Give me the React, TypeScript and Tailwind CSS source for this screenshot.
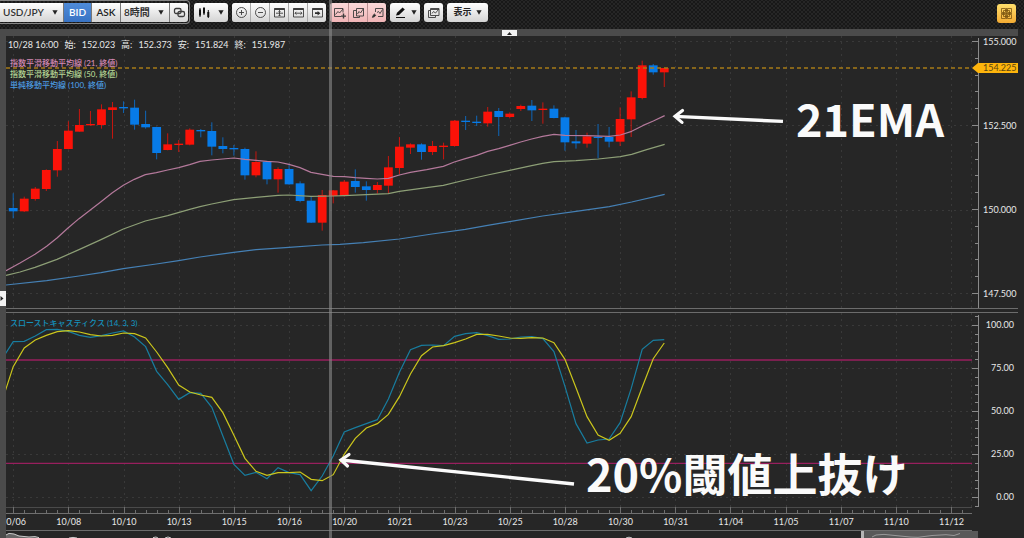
import type { ReactNode } from 'react'

type Candle = [color: 'r' | 'b', open: number, close: number, high: number, low: number]

const STEP = 11.035
const FIRST_X = 13.2
const RED = '#fb1208'
const BLUE = '#077be8'

// body top, body bottom, wick top, wick bottom (1/3 px below y=90)
const CANDLES: Candle[] = [
  ['b', 354, 364, 310, 385],
  ['r', 326, 364, 320, 366],
  ['r', 296, 327, 291, 332],
  ['r', 240, 297, 238, 303],
  ['r', 177, 241, 153, 260],
  ['r', 122, 177, 94, 178],
  ['r', 105, 125, 57, 125],
  ['r', 102, 106, 63, 107],
  ['r', 58, 105, 43, 116],
  ['r', 52, 60, 36, 146],
  ['b', 51, 55, 34, 69],
  ['b', 53, 104, 29, 119],
  ['b', 102, 112, 62, 116],
  ['b', 111, 189, 110, 208],
  ['r', 163, 180, 130, 181],
  ['r', 161, 165, 150, 186],
  ['r', 119, 164, 115, 166],
  ['b', 120, 124, 117, 142],
  ['b', 123, 170, 97, 196],
  ['b', 168, 177, 142, 190],
  ['b', 174, 178, 165, 197],
  ['b', 177, 256, 173, 269],
  ['r', 216, 256, 184, 262],
  ['b', 215, 268, 212, 283],
  ['r', 237, 268, 232, 308],
  ['b', 237, 283, 221, 284],
  ['b', 280, 333, 274, 337],
  ['b', 332, 398, 320, 399],
  ['r', 315, 398, 300, 422],
  ['r', 301, 318, 300, 340],
  ['r', 275, 318, 270, 320],
  ['b', 273, 291, 238, 308],
  ['b', 289, 300, 274, 332],
  ['r', 285, 300, 276, 311],
  ['r', 232, 287, 198, 311],
  ['r', 170, 234, 141, 252],
  ['r', 163, 173, 160, 192],
  ['b', 163, 186, 160, 209],
  ['r', 168, 186, 153, 195],
  ['r', 167, 171, 158, 208],
  ['r', 92, 168, 90, 170],
  ['b', 92, 96, 78, 120],
  ['b', 95, 99, 77, 108],
  ['r', 65, 100, 51, 110],
  ['b', 63, 81, 54, 138],
  ['r', 71, 81, 67, 85],
  ['r', 48, 57, 44, 63],
  ['b', 47, 61, 30, 93],
  ['r', 56, 60, 37, 101],
  ['b', 56, 84, 46, 85],
  ['b', 82, 157, 80, 182],
  ['b', 154, 160, 120, 176],
  ['r', 139, 161, 128, 173],
  ['b', 140, 144, 102, 205],
  ['b', 141, 155, 111, 172],
  ['r', 87, 155, 52, 168],
  ['r', 22, 88, 4, 141],
  ['r', -74, 24, -88, 28],
  ['b', -74, -53, -78, -46],
  ['r', -66, -53, -66, -9],
]

const AVERAGES = [
  {
    color: '#b4799b',
    points:
      '18,542 60,519 105,493 140,469 171,444 204,414 237,386 270,361 303,335 337,308 370,286 403,268 436,254 469,248 503,240 536,233 569,224 600,214 635,210 668,207 701,204 735,208 768,211 800,214 834,216 867,223 900,233 933,247 966,253 1000,259 1033,260 1066,263 1099,265 1132,267 1165,265 1198,255 1231,247 1280,239 1330,229 1363,216 1396,206 1430,196 1463,184 1496,176 1529,166 1562,156 1595,147 1628,139 1662,133 1695,136 1761,137 1827,139 1861,135 1895,124 1928,107 1960,93 1994,77',
  },
  {
    color: '#8d9f76',
    points:
      '18,556 60,546 105,532 171,508 237,479 303,449 370,417 436,393 503,377 569,358 600,350 635,342 701,329 768,322 834,316 867,315 933,319 1000,318 1033,317 1099,314 1165,311 1198,304 1280,293 1330,286 1396,270 1463,255 1529,241 1595,227 1628,220 1662,215 1728,212 1795,207 1861,200 1895,193 1940,179 1994,163',
  },
  {
    color: '#4580b5',
    points:
      '18,585 140,572 237,558 303,548 370,536 469,522 536,512 600,501 701,487 768,479 867,472 966,465 1020,463 1090,458 1198,447 1296,432 1396,418 1463,406 1529,395 1628,378 1728,364 1828,350 1895,336 1994,313',
  },
]

// one value per candle, starting one step left of the plot (1/3 px below y=300)
const SLOW_K = [
  177, 125, 124, 108, 89, 88, 94, 106, 112, 107, 99, 93, 111, 140, 214, 254, 298, 278, 280, 322, 408,
  493, 526, 517, 536, 503, 518, 524, 572, 528, 468, 396, 383, 371, 359, 297, 217, 149, 136, 135, 137,
  109, 101, 98, 107, 118, 117, 111, 110, 116, 155, 259, 371, 429, 420, 417, 368, 266, 148, 121, 119,
]
const SLOW_D = [
  302, 200, 144, 120, 106, 95, 92, 96, 104, 108, 106, 99, 101, 114, 156, 203, 255, 276, 285, 292, 338,
  406, 475, 514, 526, 518, 518, 516, 538, 542, 524, 463, 415, 384, 371, 343, 290, 222, 167, 141, 137,
  128, 117, 103, 103, 108, 114, 115, 113, 114, 128, 178, 263, 350, 405, 421, 400, 350, 262, 176, 129,
]

const DATES = [
  '10/06', '10/08', '10/10', '10/13', '10/15', '10/16', '10/20', '10/21', '10/23',
  '10/25', '10/28', '10/30', '10/31', '11/04', '11/05', '11/07', '11/10', '11/12',
]
const PRICES = ['155.000', '152.500', '150.000', '147.500']
const LEVELS = ['100.00', '75.00', '50.00', '25.00', '0.00']
const OHLC = [
  ['始:', '152.023'],
  ['高:', '152.373'],
  ['安:', '151.824'],
  ['終:', '151.987'],
]

const range = (n: number) => Array.from({ length: n }, (_, i) => i)
const toPoints = (values: number[]) =>
  values.map((v, i) => `${FIRST_X + (i - 1) * STEP},${300 + v / 3}`).join(' ')

const BTN = 'flex h-[19px] items-center justify-center bg-linear-to-b from-white to-[#d4d4d4] text-[#222]'
const GROUP = 'flex h-[19px] overflow-hidden rounded-[3px]'

function Caret() {
  return (
    <svg width="6" height="5" viewBox="0 0 6 5" aria-hidden="true" className="pointer-events-none">
      <path d="M0.4 0.3h5.2L3 4.7z" fill="#222" />
    </svg>
  )
}

function Icon({ children }: { children: ReactNode }) {
  return (
    <svg
      width="13"
      height="13"
      viewBox="0 0 13 13"
      fill="none"
      stroke="#3c3c3c"
      strokeWidth="0.9"
      aria-hidden="true"
    >
      {children}
    </svg>
  )
}

function Picker({ label, value, className }: { label: string; value: string; className: string }) {
  return (
    <label className={`relative flex h-full items-center bg-linear-to-b from-white to-[#d4d4d4] ${className}`}>
      <select
        aria-label={label}
        className="h-full w-full appearance-none pl-[3px] text-[10px] leading-[19px] font-semibold text-[#333] outline-none"
      >
        <option>{value}</option>
      </select>
      <span className="pointer-events-none absolute right-[5px]">
        <Caret />
      </span>
    </label>
  )
}

const FRAME_ICONS = [
  {
    name: '全体表示',
    icon: (
      <>
        <path d="M1.5 2.5h10v8.5h-10zM6.5 4.5v5.5M3 7.2h7M5.5 5.5l1-1 1 1M5.5 9l1 1 1-1" />
        <path d="M1.5 3h10" strokeWidth="1.8" />
      </>
    ),
  },
  {
    name: '幅を広げる',
    icon: (
      <>
        <path d="M1.5 2.5h10v8.5h-10zM3 7.2h7M4.4 5.8L3 7.2l1.4 1.4M8.6 5.8L10 7.2 8.6 8.6" />
        <path d="M1.5 3h10" strokeWidth="1.8" />
      </>
    ),
  },
  {
    name: '最新へ移動',
    icon: (
      <>
        <path d="M1.5 2.5h10v8.5h-10z" />
        <path d="M1.5 3h10" strokeWidth="1.8" />
        <path d="M4 6.3h2.6V4.9L9.4 7.2 6.6 9.5V8.1H4z" fill="#2a2a2a" stroke="none" />
      </>
    ),
  },
]

const DRAW_ICONS = [
  {
    name: '描画を追加',
    icon: (
      <>
        <path d="M8 10.5H1.5v-8h8.5v4M2.5 8.5L5 5.5 6.5 7 10 3" />
        <path d="M10.5 7.6v5M8 10.1h5" strokeWidth="1.4" />
      </>
    ),
  },
  {
    name: '描画を複製',
    icon: <path d="M4 4.5H1.5v7h6V10M4.5 2.5h7v7.5h-7zM5.5 8l1.5-2.5L8.5 7l3-4.5" />,
  },
  {
    name: '描画を消去',
    icon: (
      <>
        <path d="M4.5 6V2.5h7.5v8H7M6 6.5l1.5-1L9 7.5l2.5-4" />
        <path d="M1.4 11.4l.8-2.2 1.2-1.2 1.4 1.4-1.2 1.2z" fill="#2a2a2a" />
      </>
    ),
  },
]

function Toolbar() {
  return (
    <header className="flex h-[29px] items-start justify-between bg-[#262626] bg-[radial-gradient(#0a0a0a_22%,transparent_28%),radial-gradient(#0a0a0a_22%,transparent_28%)] bg-size-[4px_4px] bg-position-[0_0,2px_2px] pr-2">
      <div className="flex items-center gap-1">
        <div className="flex h-6 items-center rounded-r-[4px] border border-l-0 border-[#858585] pr-px">
          <div className="flex h-[19px] gap-px overflow-hidden rounded-r-[3px] bg-[#777]">
            <Picker label="通貨ペア" value="USD/JPY" className="w-[63px]" />
            <button className="h-full w-[27px] bg-linear-to-b from-[#4f8bd8] to-[#3873c4] text-[10px] font-semibold text-white">
              BID
            </button>
            <button className={`${BTN} w-7 text-[10px] font-semibold`}>ASK</button>
            <Picker label="足種" value="8時間" className="w-12" />
            <button aria-label="連動" className={`${BTN} w-[18px]`}>
              <Icon>
                <rect x="1.5" y="2.5" width="6.5" height="5" rx="1.5" strokeWidth="1.3" />
                <rect x="5" y="5.5" width="6.5" height="5" rx="1.5" strokeWidth="1.3" />
              </Icon>
            </button>
          </div>
        </div>
        <button aria-label="チャート種類" className={`${BTN} w-[34px] gap-2 rounded-[3px]`}>
          <svg width="12" height="13" viewBox="0 0 12 13" aria-hidden="true">
            <path d="M2 2v9M6 1v8M10.3 4v8" stroke="#111" />
            <path d="M1 3.5h2v6H1zM5 2h2v5.5H5zM9.3 6h2v5h-2z" fill="#111" />
          </svg>
          <Caret />
        </button>
        <div className={`${GROUP} gap-px bg-[#aaa]`}>
          <button aria-label="拡大" className={`${BTN} w-[18px]`}>
            <Icon>
              <circle cx="6.5" cy="6.5" r="5" />
              <path d="M4 6.5h5M6.5 4v5" />
            </Icon>
          </button>
          <button aria-label="縮小" className={`${BTN} w-[18px]`}>
            <Icon>
              <circle cx="6.5" cy="6.5" r="5" />
              <path d="M4 6.5h5" />
            </Icon>
          </button>
          {FRAME_ICONS.map((item) => (
            <button key={item.name} aria-label={item.name} className={`${BTN} w-[18px]`}>
              <Icon>{item.icon}</Icon>
            </button>
          ))}
        </div>
        <div className={`${GROUP} gap-px bg-[#b98f90]`}>
          {DRAW_ICONS.map((item) => (
            <button
              key={item.name}
              aria-label={item.name}
              className="flex h-full w-[18px] items-center justify-center bg-linear-to-b from-[#fbd9d9] to-[#f0b4b6]"
            >
              <Icon>{item.icon}</Icon>
            </button>
          ))}
        </div>
        <button aria-label="ペン" className={`${BTN} w-[30px] gap-1 rounded-[3px]`}>
          <svg width="13" height="13" viewBox="0 0 13 13" aria-hidden="true">
            <path d="M2 9.6l1-2.8L8.6 1.4l2.2 2L5 9z" fill="#111" />
            <path d="M2 11.5h9" stroke="#111" />
          </svg>
          <Caret />
        </button>
        <button aria-label="重ねて表示" className={`${BTN} w-[19px] rounded-[3px]`}>
          <Icon>
            <path d="M3.5 4.5h-2v7h7v-2M3.5 2.5h8.5v7H3.5zM5 7.5L6.5 5.5 8.5 7l3-3.5" />
            <path d="M4 3.5h8" />
          </Icon>
        </button>
        <button className={`${BTN} w-[41px] gap-1 rounded-[3px] text-[9px] font-semibold`}>
          表示
          <Caret />
        </button>
      </div>
      <button
        aria-label="レイアウト"
        className="mt-1 flex size-[19px] items-center justify-center rounded-[3px] bg-linear-to-b from-[#ffdf6b] to-[#f3ab32]"
      >
        <svg
          width="13"
          height="13"
          viewBox="0 0 13 13"
          fill="none"
          stroke="#7a5410"
          strokeWidth="0.8"
          aria-hidden="true"
        >
          <path d="M1.5 1.5h4v4h-4zM7.5 1.5h4v4h-4zM1.5 7.5h4v4h-4zM7.5 7.5h4v4h-4zM3.5 3.5h6v6h-6zM6.5 1v11M1 6.5h11" />
        </svg>
      </button>
    </header>
  )
}

function Grid({ rows, top, bottom }: { rows: number[]; top: number; bottom: number }) {
  return (
    <g stroke="#393939" strokeDasharray="2 4">
      {rows.map((y) => (
        <path key={y} d={`M6 ${y}H972`} />
      ))}
      {DATES.map((d, i) => (
        <path key={d} d={`M${Math.round(FIRST_X + i * STEP * 5) + 0.5} ${top}V${bottom}`} />
      ))}
      <path d={`M971.5 ${top}V${bottom}`} />
    </g>
  )
}

function Axis({ top, height, first, minor }: { top: number; height: number; first: number; minor: number }) {
  const before = Math.floor((first - top) / minor)
  const count = Math.floor((top + height - first) / minor) + before + 1
  return (
    <svg
      viewBox={`972 ${top} 7 ${height}`}
      preserveAspectRatio="none"
      className="h-full w-[7px] shrink-0"
      stroke="#8a8a8a"
      aria-hidden="true"
    >
      <path d={`M978.5 ${top + 2}v${height}`} />
      {range(count).map((n) => {
        const i = n - before
        return <path key={i} d={`M${i % 5 === 0 ? 972 : 975} ${Math.round(first + i * minor) + 0.5}H978`} />
      })}
    </svg>
  )
}

function PricePanel() {
  return (
    <section aria-label="価格チャート" className="relative flex h-[272px]">
      <svg viewBox="6 36 966 272" preserveAspectRatio="none" className="h-full min-w-0 flex-1" aria-hidden="true">
        <Grid rows={[41.5, 125.5, 210.5, 293.5]} top={36} bottom={308} />
        {CANDLES.map(([color, top, bottom, high, low], i) => {
          const x = FIRST_X + i * STEP
          const fill = color === 'r' ? RED : BLUE
          return (
            <g key={i} fill={fill}>
              <rect x={x - 0.5} y={90 + high / 3} width="1" height={(low - high) / 3} opacity="0.75" />
              <rect x={x - 4.4} y={90 + top / 3} width="8.8" height={(bottom - top) / 3} />
            </g>
          )
        })}
        <path d="M6 68H972" stroke="#a77b17" strokeWidth="1.4" strokeDasharray="4 3" />
        <g transform="translate(0 90) scale(0.33333)" fill="none" strokeWidth="3.6" strokeLinejoin="round">
          {AVERAGES.map((line) => (
            <polyline key={line.color} points={line.points} stroke={line.color} />
          ))}
        </g>
      </svg>
      <Axis top={36} height={272} first={41} minor={16.8} />
      <ul className="w-[39px] shrink-0 pl-1 text-[9px] leading-3 text-[#e8e8e8]">
        {PRICES.map((price) => (
          <li key={price} className="h-[84px] last:h-3">
            {price}
          </li>
        ))}
      </ul>

      <div className="absolute top-[3px] left-[2px] leading-[11px]">
        <p className="flex gap-[6px] text-[9px] text-[#e8e8e8]">
          <span>10/28 16:00</span>
          {OHLC.map(([name, value]) => (
            <span key={name} className="flex gap-[6px]">
              <span>{name}</span>
              <span>{value}</span>
            </span>
          ))}
        </p>
        <ul className="mt-2 pl-[2px] text-[8px] font-medium">
          <li className="text-[#d489b4]">指数平滑移動平均線 (21, 終値)</li>
          <li className="text-[#b5d695]">指数平滑移動平均線 (50, 終値)</li>
          <li className="text-[#4c9be0]">単純移動平均線 (100, 終値)</li>
        </ul>
      </div>

      <div className="absolute top-[27px] right-0 flex h-[10px] items-center">
        <svg width="6" height="10" viewBox="0 0 6 10" aria-hidden="true">
          <path d="M6 0v10L0 5z" fill="#fdb40c" />
        </svg>
        <span className="h-[10px] w-10 bg-[#fdb40c] pl-[5px] text-[9px] leading-[10px] text-[#5b4410]">154.225</span>
      </div>

      <div className="absolute top-[58px] left-[664px] flex items-center">
        <svg width="114" height="26" viewBox="670 105 114 26" fill="none" stroke="#fafafa" aria-hidden="true">
          <path d="M675 116.4L783 121.4" strokeWidth="3.4" />
          <path d="M682.5 110.5L675 116.4L682 122.4" strokeWidth="3.2" strokeLinecap="round" />
        </svg>
        <strong className="pl-3 font-['Noto_Sans_CJK_JP',sans-serif] text-[45px] leading-[48px] font-bold text-[#fafafa]">
          21EMA
        </strong>
      </div>
    </section>
  )
}

function StochasticPanel() {
  return (
    <section aria-label="スローストキャスティクス" className="relative flex h-[194px]">
      <svg viewBox="6 313 966 194" preserveAspectRatio="none" className="h-full min-w-0 flex-1" aria-hidden="true">
        <Grid rows={[325.5, 368.5, 411.5, 454.5, 497.5]} top={313} bottom={507} />
        <path d="M6 360H972" stroke="#981f5e" strokeWidth="1.3" />
        <path d="M6 463.4H972" stroke="#981f5e" strokeWidth="1.3" />
        <polyline points={toPoints(SLOW_K)} fill="none" stroke="#187d9f" strokeWidth="1.2" />
        <polyline points={toPoints(SLOW_D)} fill="none" stroke="#cbc61c" strokeWidth="1.2" />
      </svg>
      <Axis top={313} height={194} first={325} minor={8.6} />
      <ul className="w-[39px] shrink-0 pt-[6px] pr-1 text-right text-[9px] leading-3 text-[#e8e8e8]">
        {LEVELS.map((level) => (
          <li key={level} className="h-[43px] last:h-3">
            {level}
          </li>
        ))}
      </ul>
      <p className="absolute top-[5px] left-1 text-[8px] leading-[11px] font-medium text-[#1591bd]">
        スローストキャスティクス (14, 3, 3)
      </p>
      <div className="absolute top-[136px] left-[332px] flex items-start">
        <svg width="238" height="38" viewBox="338 449 238 38" fill="none" stroke="#fafafa" aria-hidden="true">
          <path d="M341 460L574 484" strokeWidth="3.4" />
          <path d="M349 454.5L341 460L347.5 466" strokeWidth="3.2" strokeLinecap="round" />
        </svg>
        <strong className="pl-[10px] font-['Noto_Sans_CJK_JP',sans-serif] text-[45px] leading-[48px] font-bold whitespace-nowrap text-[#fafafa]">
          20%閾値上抜け
        </strong>
      </div>
    </section>
  )
}

function TimeAxis() {
  return (
    <div className="mr-[46px] overflow-hidden border-b border-[#6c6c6c]">
      <svg
        viewBox="6 507 966 7"
        preserveAspectRatio="none"
        className="block h-[7px] w-full"
        stroke="#6f6f6f"
        aria-hidden="true"
      >
        <path d="M6 507.5H972" stroke="#4a4a4a" />
        <path d="M6 513.5H972" />
        {range(87).map((i) => (
          <path key={i} d={`M${Math.round(FIRST_X + i * STEP) + 0.5} ${i % 5 === 0 ? 507 : 510}V513`} />
        ))}
      </svg>
      <ol className="-mr-[7px] -ml-5 flex text-center text-[9px] leading-4 text-[#e8e8e8]">
        {DATES.map((date) => (
          <li key={date} className="flex-1">
            {date}
          </li>
        ))}
      </ol>
    </div>
  )
}

function Navigator() {
  return (
    <svg
      viewBox="6 531 1012 7"
      preserveAspectRatio="none"
      className="block h-[7px] w-full"
      fill="none"
      aria-hidden="true"
    >
      <path d="M6 538V535l3-1.6 5 .6 5 2 10 1 6-.4 4 1.4z" fill="#666" />
      <path d="M6 535l3-1.6 5 .6 5 2 10 1 6-.4 4 1M69 538l4-.6 4 .6M153 537.6l3-.6 2 1M165 538l3-1 3 1" stroke="#ccc" />
      <path d="M626 538l3-.8 3 .8" stroke="#ccc" />
      <path d="M862 531h116v7H862z" fill="#595959" />
      <path d="M872 537l4-2 8-.6 10 1 16 1.6 8 .3 14-1.8 14-.8 8 .8 6-2" stroke="#999" />
      <path d="M861 531h3v7h-3z" fill="#b5b5b5" />
    </svg>
  )
}

export default function App() {
  return (
    <div className="relative min-h-screen overflow-hidden bg-[#262626] font-[Lato,'Noto_Sans_CJK_JP',sans-serif]">
      <Toolbar />
      <div className="mr-[6px] flex h-[7px] items-end bg-[#4b4b4b]">
        <button aria-label="ツールバーを隠す" className="mx-auto flex h-[6px] w-[15px] items-center justify-center bg-[#f2f2f2]">
          <svg width="5" height="3" viewBox="0 0 5 3" aria-hidden="true">
            <path d="M0 3L2.5 0 5 3z" fill="#222" />
          </svg>
        </button>
      </div>
      <div className="flex">
        <aside className="w-[6px] shrink-0 bg-[#4b4b4b] pt-[255px]">
          <button aria-label="パネルを開く" className="flex h-[15px] w-[6px] items-center bg-[#f2f2f2]">
            <svg width="4" height="5" viewBox="0 0 4 5" aria-hidden="true">
              <path d="M0.5 0L3.5 2.5 0.5 5z" fill="#222" />
            </svg>
          </button>
        </aside>
        <main className="mr-[6px] min-w-0 flex-1">
          <PricePanel />
          <div className="h-[5px] border-y border-[#6c6c6c]" />
          <StochasticPanel />
          <TimeAxis />
          <Navigator />
        </main>
      </div>
      <div className="pointer-events-none absolute inset-y-0 left-[329px] w-[3px] bg-[#8a8a8a]/60" />
    </div>
  )
}
